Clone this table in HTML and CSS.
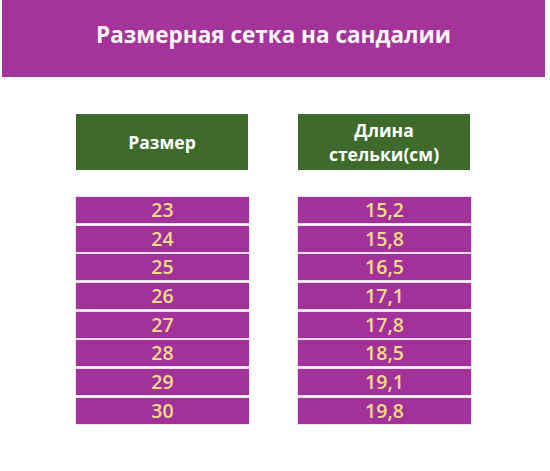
FILE: index.html
```html
<!DOCTYPE html>
<html lang="ru">
<head>
<meta charset="utf-8">
<link rel="stylesheet" href="styles.css">
</head>
<body>
<div class="page">
  <header class="banner">Размерная сетка на сандалии</header>
  <div class="table">
    <div class="col">
      <div class="head">Размер</div>
      <div class="rows">
        <div class="cell">23</div>
        <div class="cell">24</div>
        <div class="cell">25</div>
        <div class="cell">26</div>
        <div class="cell">27</div>
        <div class="cell">28</div>
        <div class="cell">29</div>
        <div class="cell">30</div>
      </div>
    </div>
    <div class="col">
      <div class="head">Длина<br>стельки(см)</div>
      <div class="rows">
        <div class="cell">15,2</div>
        <div class="cell">15,8</div>
        <div class="cell">16,5</div>
        <div class="cell">17,1</div>
        <div class="cell">17,8</div>
        <div class="cell">18,5</div>
        <div class="cell">19,1</div>
        <div class="cell">19,8</div>
      </div>
    </div>
  </div>
</div>
</body>
</html>
```
FILE: styles.css
```css
html, body {
  margin: 0;
  padding: 0;
  background: #ffffff;
}
.page {
  width: 550px;
  height: 471px;
  padding: 0 5px 0 2px;
  box-sizing: border-box;
}
.banner {
  height: 77px;
  background: #a4349a;
  color: #fdf7fb;
  font-family: "Open Sans", sans-serif;
  font-weight: 700;
  font-size: 22.5px;
  display: flex;
  align-items: center;
  justify-content: center;
  padding-bottom: 9px;
  box-sizing: border-box;
}
.table {
  display: flex;
  gap: 49px;
  padding-left: 74px;
  padding-top: 37px;
}
.col {
  width: 173px;
  display: flex;
  flex-direction: column;
}
.head {
  height: 56px;
  width: 172px;
  background: #3e6b2b;
  color: #ffffff;
  font-family: "Open Sans", sans-serif;
  font-weight: 700;
  font-size: 17.5px;
  line-height: 24px;
  display: flex;
  align-items: center;
  justify-content: center;
  text-align: center;
}
.rows {
  margin-top: 27px;
  display: grid;
  grid-auto-rows: 26px;
  row-gap: 2.7px;
}
.cell {
  background: #a2329a;
  box-shadow: 0 0 0 0.6px #e9c9e6;
  color: #f8dc86;
  font-family: "Open Sans", sans-serif;
  font-weight: 600;
  font-size: 19.5px;
  line-height: 26px;
  text-align: center;
}
```
